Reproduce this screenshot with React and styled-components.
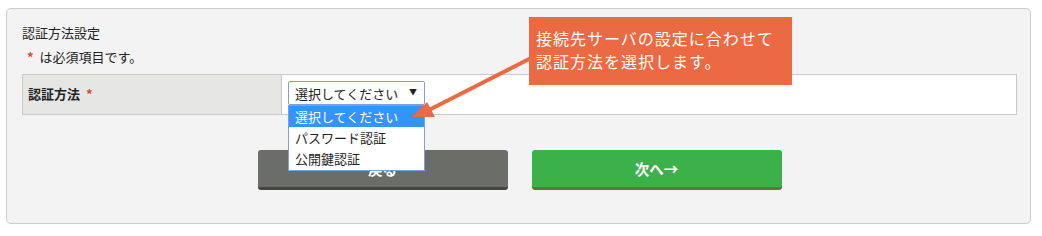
import React from "react"
import styled, { createGlobalStyle } from "styled-components"

const GlobalStyle = createGlobalStyle`
    body {
        margin: 0;
        background: #ffffff;
        font-family: "Noto Sans CJK JP", "Noto Sans", sans-serif;
        color: #222;
    }
`

const Page = styled.div`
    padding: 8px 11px 10px 6px;
`

const Panel = styled.div`
    position: relative;
    background: #f3f3f3;
    border: 1px solid #cccccc;
    border-radius: 5px;
    padding: 15px 13px 33px 15px;
`

const Title = styled.div`
    font-size: 13px;
    line-height: 18px;
    height: 18px;
`

const Required = styled.div`
    font-size: 13px;
    line-height: 18px;
    margin: 6px 0 8px 5px;
    display: flex;
    gap: 6px;
`

const Star = styled.span`
    color: #e2471f;
    font-weight: bold;
`

const FormTable = styled.div`
    display: grid;
    grid-template-columns: 259px 1fr;
    border: 1px solid #c9c9c9;
    height: 39px;
`

const LabelCell = styled.div`
    background: #e6e7e4;
    border-right: 1px solid #c9c9c9;
    font-size: 13px;
    font-weight: bold;
    display: flex;
    align-items: center;
    gap: 6px;
    padding: 0 0 2px 5px;
`

const ValueCell = styled.div`
    position: relative;
    background: #ffffff;
    padding: 6px 0 0 6px;
`

const Select = styled.div`
    box-sizing: border-box;
    width: 137px;
    height: 24px;
    border: 1px solid #7f9fd6;
    border-radius: 2px;
    background: #fff;
    display: flex;
    align-items: center;
    justify-content: space-between;
    padding: 0 7px 0 6px;
    font-size: 13px;
`

const Caret = styled.span`
    font-size: 8px;
    margin-top: -4px;
`

const OptionList = styled.div`
    position: absolute;
    left: 6px;
    top: 30px;
    width: 137px;
    box-sizing: border-box;
    background: #fff;
    border: 1px solid #7f9fd6;
    z-index: 5;
    padding-bottom: 1px;
`

const Option = styled.div`
    height: 21px;
    line-height: 21px;
    font-size: 13px;
    padding-left: 6px;
    background: ${(props) => (props.active ? "#3393ff" : "transparent")};
    color: ${(props) => (props.active ? "#ffffff" : "#222")};
`

const ButtonRow = styled.div`
    display: flex;
    justify-content: center;
    gap: 24px;
    margin-top: 35px;
`

const Button = styled.div`
    width: 250px;
    height: 37px;
    border-radius: 3px;
    border-bottom: 3px solid ${(props) => props.shade};
    background: ${(props) => props.color};
    color: #fff;
    font-size: 14.5px;
    font-weight: bold;
    display: flex;
    align-items: center;
    justify-content: center;
`

const Callout = styled.div`
    position: absolute;
    left: 522px;
    top: 8px;
    width: 263px;
    height: 68px;
    box-sizing: border-box;
    background: #ec6a43;
    color: #fff;
    font-size: 16px;
    letter-spacing: 1px;
    line-height: 23px;
    padding: 10px 0 0 7px;
    z-index: 6;
`

const ArrowSvg = styled.svg`
    position: absolute;
    left: 0;
    top: 0;
    z-index: 7;
    pointer-events: none;
`

export default function App() {
    return (
        <>
            <GlobalStyle />
            <Page>
                <Panel>
                    <Title>認証方法設定</Title>
                    <Required>
                        <Star>*</Star>
                        <span>は必須項目です。</span>
                    </Required>
                    <FormTable>
                        <LabelCell>
                            認証方法 <Star>*</Star>
                        </LabelCell>
                        <ValueCell>
                            <Select>
                                <span>選択してください</span>
                                <Caret>▼</Caret>
                            </Select>
                            <OptionList>
                                <Option active>選択してください</Option>
                                <Option>パスワード認証</Option>
                                <Option>公開鍵認証</Option>
                            </OptionList>
                        </ValueCell>
                    </FormTable>
                    <ButtonRow>
                        <Button color="#6b6e68" shade="#444541">戻る</Button>
                        <Button color="#3cb14a" shade="#4e7e3c">次へ→</Button>
                    </ButtonRow>
                    <Callout>
                        接続先サーバの設定に合わせて
                        <br />
                        認証方法を選択します。
                    </Callout>
                    <ArrowSvg width="1030" height="220" viewBox="0 0 1030 220">
                        <line x1="526" y1="48" x2="418" y2="103" stroke="#ec6a43" strokeWidth="4" />
                        <polygon points="405,108 420,93 428,108" fill="#ec6a43" />
                    </ArrowSvg>
                </Panel>
            </Page>
        </>
    )
}
